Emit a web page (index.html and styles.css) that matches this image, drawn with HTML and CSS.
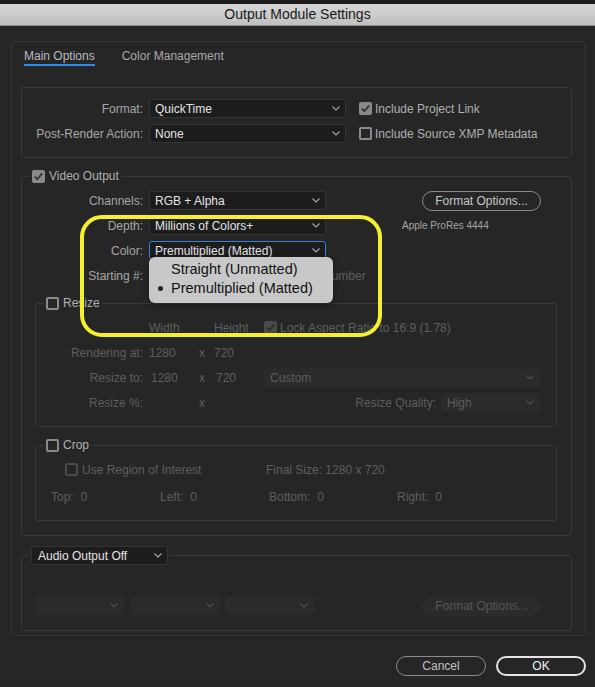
FILE: index.html
```html
<!DOCTYPE html>
<html lang="en">
<head>
    <meta charset="UTF-8">
    <title>Output Module Settings</title>
    <link rel="stylesheet" href="styles.css">
</head>
<body>
    <div class="window">
        <div class="titlebar">Output Module Settings</div>

        <div class="panel">
            <div class="tabs">
                <span class="tab active">Main Options</span>
                <span class="tab">Color Management</span>
            </div>

            <!-- format / post-render -->
            <div class="group format-group">
                <div class="row">
                    <span class="label">Format:</span>
                    <div class="select w-format"><span>QuickTime</span><svg class="chev" viewBox="0 0 8 5"><path d="M0.5 0.5L4 4L7.5 0.5"/></svg></div>
                    <label class="check gap-format"><span class="cb checked"><svg viewBox="0 0 13 13"><path d="M2.8 6.6L5.4 9.2L10.2 3.4"/></svg></span>Include Project Link</label>
                </div>
                <div class="row">
                    <span class="label">Post-Render Action:</span>
                    <div class="select w-format"><span>None</span><svg class="chev" viewBox="0 0 8 5"><path d="M0.5 0.5L4 4L7.5 0.5"/></svg></div>
                    <label class="check gap-format"><span class="cb"></span>Include Source XMP Metadata</label>
                </div>
            </div>

            <!-- video output -->
            <fieldset class="group video-group">
                <legend><label class="check legend-text"><span class="cb checked"><svg viewBox="0 0 13 13"><path d="M2.8 6.6L5.4 9.2L10.2 3.4"/></svg></span>Video Output</label></legend>

                <div class="row">
                    <span class="label">Channels:</span>
                    <div class="select w-video"><span>RGB + Alpha</span><svg class="chev" viewBox="0 0 8 5"><path d="M0.5 0.5L4 4L7.5 0.5"/></svg></div>
                    <button class="btn btn-options">Format Options...</button>
                </div>
                <div class="row">
                    <span class="label">Depth:</span>
                    <div class="select w-video"><span>Millions of Colors+</span><svg class="chev" viewBox="0 0 8 5"><path d="M0.5 0.5L4 4L7.5 0.5"/></svg></div>
                    <span class="codec">Apple ProRes 4444</span>
                </div>
                <div class="row">
                    <span class="label">Color:</span>
                    <div class="select w-video focused"><span>Premultiplied (Matted)</span><svg class="chev" viewBox="0 0 8 5"><path d="M0.5 0.5L4 4L7.5 0.5"/></svg></div>
                </div>
                <div class="row">
                    <span class="label">Starting #:</span>
                    <label class="check disabled frame-number"><span class="cb"></span>Use Comp Frame Number</label>
                </div>

                <fieldset class="group sub-group resize-group">
                    <legend><label class="check legend-text"><span class="cb"></span>Resize</label></legend>
                    <div class="row dim">
                        <span class="label label-sub"></span>
                        <span class="col-a">Width</span>
                        <span class="col-x"></span>
                        <span class="col-b">Height</span>
                        <label class="check disabled"><span class="cb checked"><svg viewBox="0 0 13 13"><path d="M2.8 6.6L5.4 9.2L10.2 3.4"/></svg></span>Lock Aspect Ratio to 16:9 (1.78)</label>
                    </div>
                    <div class="row dim">
                        <span class="label label-sub">Rendering at:</span>
                        <span class="col-a">1280</span>
                        <span class="col-x">x</span>
                        <span class="col-b">720</span>
                    </div>
                    <div class="row dim">
                        <span class="label label-sub">Resize to:</span>
                        <span class="col-a field">1280</span>
                        <span class="col-x">x</span>
                        <span class="col-b field">720</span>
                        <div class="select disabled w-custom"><span>Custom</span><svg class="chev" viewBox="0 0 8 5"><path d="M0.5 0.5L4 4L7.5 0.5"/></svg></div>
                    </div>
                    <div class="row dim">
                        <span class="label label-sub">Resize %:</span>
                        <span class="col-a"></span>
                        <span class="col-x">x</span>
                        <span class="col-b"></span>
                        <span class="label label-quality">Resize Quality:</span>
                        <div class="select disabled w-quality"><span>High</span><svg class="chev" viewBox="0 0 8 5"><path d="M0.5 0.5L4 4L7.5 0.5"/></svg></div>
                    </div>
                </fieldset>

                <fieldset class="group sub-group crop-group">
                    <legend><label class="check legend-text"><span class="cb"></span>Crop</label></legend>
                    <div class="row dim">
                        <label class="check disabled roi"><span class="cb"></span>Use Region of Interest</label>
                        <span>Final Size: 1280 x 720</span>
                    </div>
                    <div class="row dim crop-values">
                        <span class="crop-cell c-top">Top:<b>0</b></span>
                        <span class="crop-cell c-left">Left:<b>0</b></span>
                        <span class="crop-cell c-bottom">Bottom:<b>0</b></span>
                        <span class="crop-cell">Right:<b>0</b></span>
                    </div>
                </fieldset>
            </fieldset>

            <!-- audio output -->
            <fieldset class="group audio-group">
                <legend class="audio-legend"><div class="select w-audio"><span>Audio Output Off</span><svg class="chev" viewBox="0 0 8 5"><path d="M0.5 0.5L4 4L7.5 0.5"/></svg></div></legend>
                <div class="row audio-row">
                    <div class="select disabled w-a1"><span></span><svg class="chev" viewBox="0 0 8 5"><path d="M0.5 0.5L4 4L7.5 0.5"/></svg></div>
                    <div class="select disabled w-a2"><span></span><svg class="chev" viewBox="0 0 8 5"><path d="M0.5 0.5L4 4L7.5 0.5"/></svg></div>
                    <div class="select disabled w-a3"><span></span><svg class="chev" viewBox="0 0 8 5"><path d="M0.5 0.5L4 4L7.5 0.5"/></svg></div>
                    <button class="btn btn-disabled">Format Options...</button>
                </div>
            </fieldset>
        </div>

        <div class="footer">
            <button class="btn btn-cancel">Cancel</button>
            <button class="btn btn-ok">OK</button>
        </div>

        <!-- open popup menu of the Color select -->
        <div class="popup">
            <div class="popup-item">Straight (Unmatted)</div>
            <div class="popup-item selected">Premultiplied (Matted)</div>
        </div>

        <!-- yellow annotation -->
        <div class="highlight"></div>
    </div>
</body>
</html>
```

FILE: styles.css
```css
* {
    box-sizing: border-box;
}

body {
    margin: 0;
    background-color: #262626;
    font-family: "Liberation Sans", Arial, sans-serif;
    font-size: 12px;
    color: #a6a6a6;
}

.window {
    position: relative;
    width: 595px;
    height: 687px;
    border-top: 4px solid #1c1c1c;
    overflow: hidden;
}

.titlebar {
    height: 22px;
    line-height: 21px;
    background: linear-gradient(#d7d7d7, #c0c0c0);
    border-bottom: 1px solid #8c8c8c;
    color: #1a1a1a;
    font-size: 14px;
    text-align: center;
}

.panel {
    margin: 15px 9px 0 11px;
    border: 1px solid #363636;
    border-radius: 4px;
    padding-bottom: 4px;
}

/* tabs */
.tabs {
    display: flex;
    gap: 27px;
    padding: 8px 0 0 12px;
}

.tab {
    line-height: 13px;
    padding-bottom: 1px;
    border-bottom: 2px solid transparent;
    color: #a9a9a9;
}

.tab.active {
    color: #b7bcc2;
    border-bottom-color: #2f8ded;
}

/* group boxes */
.group {
    margin: 0 13px 0 9px;
    border: 1px solid #383838;
    border-radius: 3px;
    padding: 0;
    min-width: 0;
}

.group legend {
    margin-left: 8px;
    padding: 0 2px;
    line-height: 14px;
}

.format-group {
    margin-top: 21px;
    padding: 11px 0 14px 0;
}

.video-group {
    margin-top: 11px;
    padding: 8px 0 14px 0;
}

.sub-group {
    margin: 11px 14px 0 13px;
    padding: 8px 0 14px 0;
}

.crop-group {
    margin-top: 11px;
}

.audio-group {
    margin-top: 10px;
    padding: 31px 0 15px 0;
}

.group .audio-legend {
    margin-left: 7px;
    line-height: normal;
}

.audio-row {
    padding-left: 13px;
}

/* rows */
.row {
    display: flex;
    align-items: center;
    height: 19px;
    white-space: nowrap;
}

.row + .row {
    margin-top: 6px;
}

.crop-group .row + .row {
    margin-top: 8px;
}

.label {
    width: 121px;
    margin-right: 6px;
    text-align: right;
    flex-shrink: 0;
}

.label-sub {
    width: 107px;
}

.label-quality {
    width: 172px;
    margin-right: 5px;
}

.dim {
    color: #5e5e5e;
}

.col-a {
    width: 50px;
    flex-shrink: 0;
}

.col-x {
    width: 15px;
    flex-shrink: 0;
}

.col-b {
    width: 50px;
    flex-shrink: 0;
}

.field {
    padding-left: 2px;
}

/* selects */
.select {
    display: flex;
    align-items: center;
    justify-content: space-between;
    height: 19px;
    padding: 0 5px 0 5px;
    background-color: #1c1c1c;
    border: 1px solid #343434;
    border-radius: 3px;
    color: #e4e4e4;
    flex-shrink: 0;
}

.select.focused {
    border-color: #3281d8;
}

.select.disabled {
    background-color: #2b2b2b;
    border-color: #2b2b2b;
    color: #5e5e5e;
}

.chev {
    width: 8px;
    height: 5px;
    fill: none;
    stroke: #a8a8a8;
    stroke-width: 1.1;
}

.select.disabled .chev {
    stroke: #4c4c4c;
}

.w-format {
    width: 197px;
}

.w-video {
    width: 177px;
}

.w-custom {
    width: 276px;
}

.w-quality {
    width: 99px;
}

.w-audio {
    width: 137px;
    padding-left: 6px;
}

.w-a1 {
    width: 89px;
}

.w-a2 {
    width: 90px;
    margin-left: 6px;
}

.w-a3 {
    width: 89px;
    margin-left: 5px;
}

/* checkboxes */
.check {
    display: flex;
    align-items: center;
    gap: 3px;
    color: #b0b0b0;
}

.gap-format {
    margin-left: 13px;
}

.cb {
    display: inline-block;
    width: 13px;
    height: 13px;
    border: 2px solid #8a8a8a;
    border-radius: 2px;
    flex-shrink: 0;
}

.cb.checked {
    background-color: #8a8a8a;
    border: none;
}

.cb svg {
    display: block;
    width: 13px;
    height: 13px;
    fill: none;
    stroke: #333333;
    stroke-width: 1.8;
}

.check.disabled {
    color: #5e5e5e;
}

.check.disabled .cb {
    border-color: #4a4a4a;
}

.check.disabled .cb.checked {
    background-color: #4a4a4a;
}

.check.disabled .cb svg {
    stroke: #2c2c2c;
}

.legend-text {
    gap: 4px;
}

.frame-number {
    margin-left: 60px;
}

.roi {
    width: 230px;
    padding-left: 29px;
    gap: 4px;
}

.codec {
    margin-left: 76px;
    font-size: 10px;
    color: #a3a3a3;
}

/* crop values */
.crop-values {
    padding-left: 15px;
}

.crop-cell {
    flex-shrink: 0;
}

.crop-cell b {
    font-weight: normal;
    margin-left: 7px;
}

.c-top,
.c-left {
    width: 109px;
}

.c-bottom {
    width: 128px;
}

/* buttons */
.btn {
    height: 20px;
    padding: 0;
    border-radius: 10px;
    background: transparent;
    font-family: "Liberation Sans", Arial, sans-serif;
    font-size: 12px;
    flex-shrink: 0;
}

.btn-options {
    width: 119px;
    margin-left: 96px;
    border: 1.5px solid #8a8a8a;
    color: #c6c6c6;
}

.btn-disabled {
    width: 119px;
    margin-left: 108px;
    border: none;
    background-color: #2b2b2b;
    color: #575757;
}

.footer {
    display: flex;
    justify-content: flex-end;
    gap: 10px;
    margin-top: 20px;
    padding-right: 9px;
}

.btn-cancel {
    width: 90px;
    border: 1.5px solid #8c8c8c;
    color: #c2c2c2;
}

.btn-ok {
    width: 90px;
    border: 2px solid #e4e4e4;
    color: #f4f4f4;
}

/* popup menu over the Color select */
.popup {
    position: absolute;
    left: 149px;
    top: 253px;
    width: 184px;
    height: 46px;
    padding-top: 3px;
    background-color: #c8c8c8;
    border-radius: 6px;
    box-shadow: 0 2px 6px rgba(0, 0, 0, 0.4);
}

.popup-item {
    position: relative;
    height: 19px;
    line-height: 19px;
    padding-left: 22px;
    font-size: 14.5px;
    color: #111111;
}

.popup-item.selected::before {
    content: "";
    position: absolute;
    left: 9px;
    top: 7px;
    width: 5px;
    height: 5px;
    border-radius: 50%;
    background-color: #222222;
}

/* yellow annotation ring */
.highlight {
    position: absolute;
    left: 80px;
    top: 211px;
    width: 302px;
    height: 122px;
    border: 4px solid #f5f02c;
    border-radius: 22px;
}
```
